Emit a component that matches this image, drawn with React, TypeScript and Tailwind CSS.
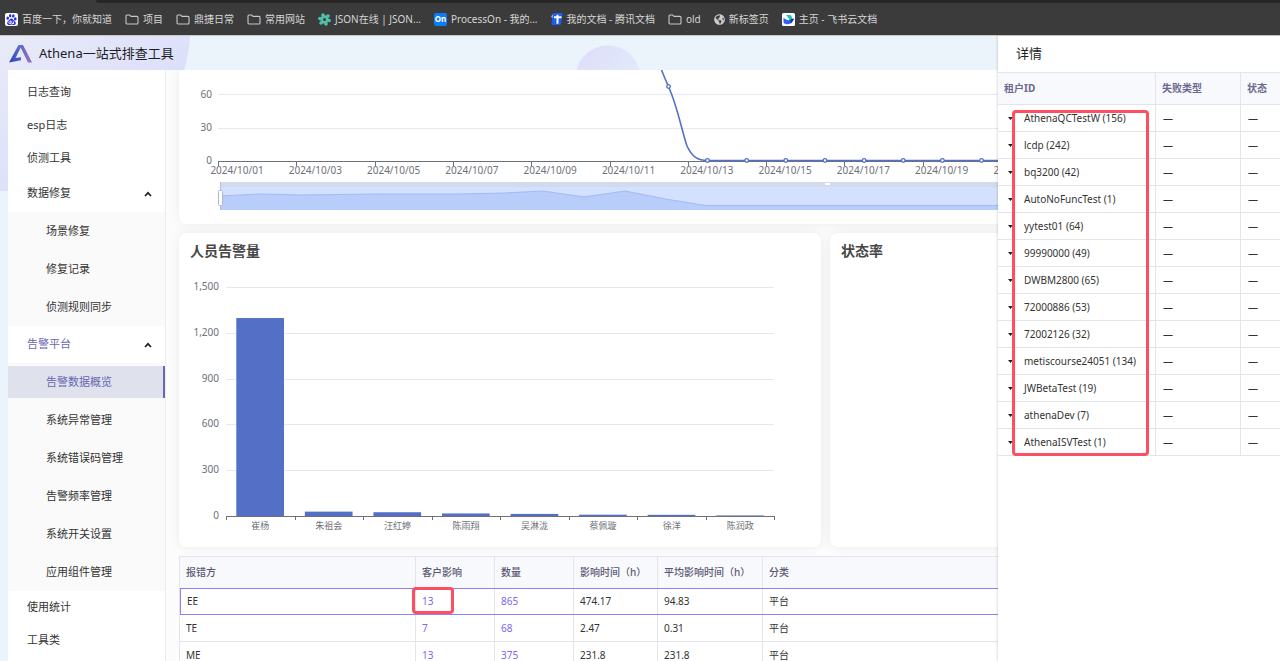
import type { ReactNode } from "react";
import { SiBaidu } from "react-icons/si";
import { FaGlobeAmericas } from "react-icons/fa";

/* ---------------- data ---------------- */

const customers = [
  "AthenaQCTestW (156)",
  "lcdp (242)",
  "bq3200 (42)",
  "AutoNoFuncTest (1)",
  "yytest01 (64)",
  "99990000 (49)",
  "DWBM2800 (65)",
  "72000886 (53)",
  "72002126 (32)",
  "metiscourse24051 (134)",
  "JWBetaTest (19)",
  "athenaDev (7)",
  "AthenaISVTest (1)",
];

const errorRows = [
  { side: "EE", customers: 13, count: 865, hours: "474.17", avg: "94.83", type: "平台" },
  { side: "TE", customers: 7, count: 68, hours: "2.47", avg: "0.31", type: "平台" },
  { side: "ME", customers: 13, count: 375, hours: "231.8", avg: "231.8", type: "平台" },
];

const people = [
  { name: "崔杨", value: 1300 },
  { name: "朱祖会", value: 32 },
  { name: "汪红婷", value: 28 },
  { name: "陈雨翔", value: 20 },
  { name: "吴淋泷", value: 17 },
  { name: "蔡佩璇", value: 12 },
  { name: "徐洋", value: 11 },
  { name: "陈润政", value: 7 },
];

const days = ["01", "03", "05", "07", "09", "11", "13", "15", "17", "19", "21"];

const App = () => {
  return (
    <div className="flex h-screen flex-col overflow-hidden bg-white font-['Noto_Sans','Noto_Sans_CJK_SC',sans-serif] text-[11px] text-[#333333]">
      <BookmarkBar />
      <div className="flex min-h-0 flex-1">
        <div className="relative isolate flex min-w-0 flex-1 flex-col overflow-hidden bg-[#ebf3fb]">
          <HeaderBackdrop />
          <header className="flex h-[34px] shrink-0 items-center gap-[7px] pt-[2px] pl-[9px]">
            <AthenaLogo />
            <h1 className="text-[13px] text-[#1d1d1f]">Athena一站式排查工具</h1>
          </header>
          <div className="flex min-h-0 flex-1 pl-2">
            <Sidebar />
            <main className="min-w-0 flex-1 overflow-hidden bg-[#fcfcfc] pl-[13px]">
              <div className="flex min-w-[1253px] flex-col gap-[9px]">
                <section className="rounded-b-lg bg-white shadow-[0_0_12px_rgba(0,0,0,0.07)]">
                  <TrendChart />
                </section>
                <div className="flex gap-[9px]">
                  <Card title="人员告警量" className="w-[642px] shrink-0">
                    <PeopleChart />
                  </Card>
                  <Card title="状态率" className="flex-1" />
                </div>
                <ErrorTable />
              </div>
            </main>
          </div>
        </div>
        <DetailDrawer />
      </div>
    </div>
  );
};

export default App;

/* ---------------- browser bookmarks ---------------- */

function BookmarkBar() {
  return (
    <nav className="flex h-9 shrink-0 flex-col border-b border-[#c9c9c4] bg-[#3b3b3b] text-[10px] text-[#d6d6d6]">
      <div className="flex h-[3px] pl-24">
        <div className="flex-1 rounded-bl bg-[#272727]" />
      </div>
      <div className="flex flex-1 items-center gap-[13px] pl-[5px] whitespace-nowrap">
        <Bookmark
          label="百度一下，你就知道"
          icon={
            <span className="flex size-[13px] items-center justify-center rounded-xs bg-white">
              <SiBaidu size={11} color="#2932e1" />
            </span>
          }
        />
        <Bookmark label="项目" icon={<FolderIcon />} />
        <Bookmark label="鼎捷日常" icon={<FolderIcon />} />
        <Bookmark label="常用网站" icon={<FolderIcon />} />
        <Bookmark
          label="JSON在线 | JSON..."
          icon={
            <svg width="13" height="13" viewBox="0 0 13 13" fill="#4fc1a6">
              <circle cx="6.5" cy="6.5" r="4.2" />
              <circle cx="5" cy="2" r="1.8" />
              <circle cx="10" cy="3" r="1.8" />
              <circle cx="11.2" cy="7.5" r="1.7" />
              <circle cx="8" cy="11" r="1.8" />
              <circle cx="3" cy="10" r="1.8" />
              <circle cx="1.8" cy="5.5" r="1.7" />
              <circle cx="6.5" cy="6.5" r="1.5" fill="#3b3b3b" />
            </svg>
          }
        />
        <Bookmark
          label="ProcessOn - 我的..."
          icon={
            <span className="flex size-[13px] items-center justify-center rounded-xs bg-[#0a7cf5] text-[8px] leading-none font-bold text-white">
              On
            </span>
          }
        />
        <Bookmark
          label="我的文档 - 腾讯文档"
          icon={
            <svg width="12" height="12" viewBox="0 0 12 12">
              <path d="M3 0h7.5a1 1 0 0 1 1 1L10 11a1 1 0 0 1-1 1H1.500a1 1 0 0 1-1-1L2 1a1 1 0 0 1 1-1Z" fill="#1c5cf0" />
              <path d="M0 3.500 2 1v3ZM0 3.500h2l-.5 2Z" fill="#7fb0ff" />
              <path d="M3 4.200h7.500M6.500 1.800v9" stroke="#fff" strokeWidth="2" />
            </svg>
          }
        />
        <Bookmark label="old" icon={<FolderIcon />} />
        <Bookmark label="新标签页" icon={<FaGlobeAmericas size={11} color="#c9cbce" />} />
        <Bookmark
          label="主页 - 飞书云文档"
          icon={
            <svg width="13" height="13" viewBox="0 0 13 13">
              <rect width="13" height="13" rx="1.500" fill="#fff" />
              <path d="M4 2h4.500c1 1 1.600 2.400 1.800 3.800L7.500 7C6.500 5 5.500 3.400 4 2Z" fill="#12c9b2" />
              <path d="M1.500 4.500C4 7 6.500 8 8.500 6.600 9.700 5.700 10.800 5.500 12 5.900 10.800 7.500 10.500 9.500 8.500 10.600c-2.500 1.300-5.300.7-7-.8Z" fill="#2f62f4" />
              <path d="M8 7c1-1.200 2.600-1.600 4-1.100-1.200 1.600-1.500 3-3 4.300Z" fill="#123a9c" />
            </svg>
          }
        />
      </div>
    </nav>
  );
}

function Bookmark({ label, icon }: { label: string; icon: ReactNode }) {
  return (
    <a href="#" className="flex items-center gap-[4px]">
      {icon}
      {label}
    </a>
  );
}

function FolderIcon() {
  return (
    <svg width="14" height="11" viewBox="0 0 14 11" fill="none" stroke="#c8c8c8" strokeWidth="1.100">
      <path d="M1 2a1 1 0 0 1 1-1h2.600l1.500 1.400H12a1 1 0 0 1 1 1V9a1 1 0 0 1-1 1H2a1 1 0 0 1-1-1Z" />
    </svg>
  );
}

/* ---------------- header ---------------- */

function HeaderBackdrop() {
  return (
    <svg className="absolute top-0 left-0 -z-10" width="700" height="155" viewBox="0 0 700 155">
      <defs>
        <linearGradient id="slab" x1="0" y1="0" x2="1" y2="1">
          <stop offset="0" stopColor="#e9ebf8" />
          <stop offset="0.6" stopColor="#dcdffa" />
          <stop offset="1" stopColor="#dadcfa" />
        </linearGradient>
        <linearGradient id="moon" x1="0" y1="0" x2="1" y2="1">
          <stop offset="0" stopColor="#dcddf8" />
          <stop offset="0.7" stopColor="#e3eafc" />
        </linearGradient>
      </defs>
      <path d="M0 0H190Q189 18 184 34L150 155H0Z" fill="url(#slab)" />
      <circle cx="608" cy="42" r="32.500" fill="url(#moon)" />
    </svg>
  );
}

function AthenaLogo() {
  return (
    <svg width="23" height="18" viewBox="0 0 23 18">
      <defs>
        <linearGradient id="logoLeft" x1="0" y1="1" x2="1" y2="0">
          <stop offset="0" stopColor="#2444c4" />
          <stop offset="1" stopColor="#6a74c8" />
        </linearGradient>
        <linearGradient id="logoRight" x1="0" y1="0" x2="1" y2="1">
          <stop offset="0" stopColor="#5968c0" />
          <stop offset="1" stopColor="#9a72bb" />
        </linearGradient>
      </defs>
      <path d="M9.500 0H14L23 17.500H19L12 3.200Z" fill="url(#logoRight)" />
      <path d="M9.500 0H13L6.500 13 12 12.200V15.200L0 17.500Z" fill="url(#logoLeft)" />
    </svg>
  );
}

/* ---------------- sidebar ---------------- */

function Sidebar() {
  return (
    <aside className="w-[158px] shrink-0 overflow-hidden border-r border-[#ededf0] bg-white pt-[6px]">
      <MenuItem label="日志查询" />
      <MenuItem label="esp日志" />
      <MenuItem label="侦测工具" />
      <MenuGroup label="数据修复" items={["场景修复", "修复记录", "侦测规则同步"]} />
      <MenuGroup
        label="告警平台"
        active="告警数据概览"
        items={[
          "告警数据概览",
          "系统异常管理",
          "系统错误码管理",
          "告警频率管理",
          "系统开关设置",
          "应用组件管理",
        ]}
      />
      <MenuItem label="使用统计" />
      <MenuItem label="工具类" />
    </aside>
  );
}

function MenuItem({ label }: { label: string }) {
  return (
    <a href="#" className="flex h-[33px] items-center pl-[19px]">
      {label}
    </a>
  );
}

function MenuGroup({
  label,
  items,
  active,
}: {
  label: string;
  items: string[];
  active?: string;
}) {
  return (
    <div>
      <button
        type="button"
        className={`flex h-[37px] w-full items-center justify-between pr-[13px] pl-[19px] ${
          active ? "text-[#6a66b0]" : ""
        }`}
      >
        {label}
        <svg width="8" height="6" viewBox="0 0 8 6" fill="none" stroke="#222" strokeWidth="1.700">
          <path d="M1 5 4 1.800 7 5" />
        </svg>
      </button>
      <div className="bg-[#fafafa]">
        {items.map((item) => (
          <div key={item} className="py-[3px]">
            <a
              href="#"
              className={`flex h-8 items-center pl-[38px] ${
                item === active
                  ? "border-r-2 border-[#6a66b0] bg-[#dfe1ed] text-[#6a66b0]"
                  : ""
              }`}
            >
              {item}
            </a>
          </div>
        ))}
      </div>
    </div>
  );
}

/* ---------------- charts ---------------- */

function Card({
  title,
  className,
  children,
}: {
  title: string;
  className: string;
  children?: ReactNode;
}) {
  return (
    <section className={`rounded-lg bg-white shadow-[0_0_12px_rgba(0,0,0,0.07)] ${className}`}>
      <h2 className="flex h-[35px] items-center pl-[11px] text-[14px] font-bold text-[#464646]">
        {title}
      </h2>
      {children}
    </section>
  );
}

function TrendChart() {
  const step = 39.15;
  const zeros = Array.from({ length: 10 }, (_, i) => 528.5 + i * step);

  return (
    <svg className="block" width="1253" height="154" viewBox="0 0 1253 154">
      <g stroke="#e6eaf4">
        <path d="M39 24.500H1253M39 58.500H1253" />
      </g>
      <path d="M39 91.500H1253" stroke="#6e7079" />
      <g fontSize="10" fill="#6e7079" textAnchor="end">
        <text x="33" y="28">60</text>
        <text x="33" y="61">30</text>
        <text x="33" y="94">0</text>
      </g>
      <g fontSize="10" fill="#6e7079" textAnchor="middle">
        {days.map((d, i) => (
          <g key={d}>
            <path d={`M${Math.round(39 + i * step * 2) + 0.5} 91v5`} stroke="#6e7079" />
            <text x={58 + i * step * 2} y="104">
              2024/10/{d}
            </text>
          </g>
        ))}
      </g>
      <path
        d="M482.500 0C485 6 487 11 489.500 16.500C499 38 502 58 508 76C513 87 519 90.500 528.500 90.500H1253"
        fill="none"
        stroke="#5470c6"
        strokeWidth="1.600"
      />
      <g fill="#fff" stroke="#5470c6" strokeWidth="1.300">
        <circle cx="489.500" cy="16.500" r="1.800" />
        {zeros.map((x) => (
          <circle key={x} cx={x} cy="90.500" r="1.800" />
        ))}
      </g>

      {/* zoom slider */}
      <rect x="41" y="112" width="1212" height="28" fill="#d3e0fe" />
      <rect x="41" y="112" width="1212" height="5" fill="#d2daee" />
      <path
        d="M41 126 82 124 121 125 201 124 281 124 326 123 364 121 405 127 446 121 486 129 527 135.500H1253V140H41Z"
        fill="#b9cdfb"
      />
      <path
        d="M41 126 82 124 121 125 201 124 281 124 326 123 364 121 405 127 446 121 486 129 527 135.500H1253"
        fill="none"
        stroke="#a0bbfa"
      />
      <path d="M41.500 112V140" stroke="#acc0e6" />
      <rect x="39.500" y="120.500" width="4" height="15" rx="1" fill="#fff" stroke="#acb8d1" />
      <rect x="646" y="113" width="5" height="2" fill="#fff" />
    </svg>
  );
}

function PeopleChart() {
  const labels = ["1,500", "1,200", "900", "600", "300", "0"];
  const bandWidth = 68.56;
  const base = 248.5;

  return (
    <svg className="block" width="642" height="279" viewBox="0 0 642 279">
      {labels.map((label, i) => {
        const y = Math.round(19 + i * 45.8) + 0.5;
        return (
          <g key={label}>
            {label !== "0" && <path d={`M47 ${y}H595`} stroke="#e4e8f3" />}
            <text x="40" y={y + 2} fontSize="10" fill="#6e7079" textAnchor="end">
              {label}
            </text>
          </g>
        );
      })}
      {people.map((p, i) => {
        const height = (p.value / 1500) * 229;
        const x = 47 + i * bandWidth;
        return (
          <g key={p.name}>
            <rect x={x + 10.3} y={base - height} width="47.700" height={height} fill="#5470c6" />
            <text x={x + bandWidth / 2} y="261" fontSize="9" fill="#6e7079" textAnchor="middle">
              {p.name}
            </text>
          </g>
        );
      })}
      <path d="M47 248.500H596" stroke="#6e7079" />
      {Array.from({ length: 9 }, (_, i) => (
        <path key={i} d={`M${Math.round(47 + i * bandWidth) + 0.5} 248v4`} stroke="#6e7079" />
      ))}
    </svg>
  );
}

/* ---------------- tables ---------------- */

function ErrorTable() {
  const head = ["报错方", "客户影响", "数量", "影响时间（h）", "平均影响时间（h）", "分类"];

  return (
    <table className="w-full table-fixed border-separate border-spacing-0 border-t border-l border-[#e4e5ea] bg-white text-left">
      <colgroup>
        <col className="w-[236px]" />
        <col className="w-[79px]" />
        <col className="w-[79px]" />
        <col className="w-[84px]" />
        <col className="w-[105px]" />
        <col />
      </colgroup>
      <thead>
        <tr className="h-[31px] bg-[#f8f9fc] text-[10px] text-[#5c5875]">
          {head.map((h) => (
            <th
              key={h}
              className="border-r border-[#e4e5ea] px-[6px] py-0 font-medium whitespace-nowrap"
            >
              {h}
            </th>
          ))}
        </tr>
      </thead>
      <tbody>
        {errorRows.map((r, i) => {
          const selected = i === 0;
          const cell = selected
            ? "border-y border-[#8f80f5] px-[6px] py-0 shadow-[inset_-1px_0_0_#e4e5ea]"
            : "border-r border-b border-[#e4e5ea] px-[6px] py-0";
          return (
            <tr key={r.side} className="h-[27px] text-[10px]">
              <td className={selected ? `border-l ${cell}` : cell}>{r.side}</td>
              <td className={`relative ${cell}`}>
                <a href="#" className="text-[#7b66f5]">
                  {r.customers}
                </a>
                {selected && (
                  <span className="absolute -top-[2px] -left-[4px] h-[27px] w-[42px] rounded-[4px] border-3 border-[#ff4d61]" />
                )}
              </td>
              <td className={cell}>
                <a href="#" className="text-[#7b66f5]">
                  {r.count}
                </a>
              </td>
              <td className={cell}>{r.hours}</td>
              <td className={cell}>{r.avg}</td>
              <td className={cell}>{r.type}</td>
            </tr>
          );
        })}
      </tbody>
    </table>
  );
}

function DetailDrawer() {
  return (
    <aside className="z-10 flex w-[282px] shrink-0 flex-col bg-white shadow-[-1px_0_2px_rgba(0,0,0,0.12)]">
      <h2 className="flex h-9 items-center pl-[18px] text-[13px] text-[#222222]">详情</h2>
      <div className="relative">
        <table className="w-full table-fixed border-separate border-spacing-0 border-t border-[#e4e5ea] text-left text-[10px]">
          <colgroup>
            <col className="w-[158px]" />
            <col className="w-[85px]" />
            <col />
          </colgroup>
          <thead>
            <tr className="h-8 bg-[#f8f9fc] text-[#6d6890]">
              {["租户ID", "失败类型", "状态"].map((h) => (
                <th
                  key={h}
                  className="border-r border-b border-[#e4e5ea] px-[6px] py-0 font-bold last:border-r-0"
                >
                  {h}
                </th>
              ))}
            </tr>
          </thead>
          <tbody>
            {customers.map((name) => (
              <tr key={name} className="h-[27px]">
                <td className="border-r border-b border-[#e4e5ea] py-0 pl-[10px]">
                  <div className="flex items-center gap-[11px] whitespace-nowrap">
                    <svg width="5" height="3" viewBox="0 0 5 3" fill="#222">
                      <path d="M0 0H5L2.500 3Z" />
                    </svg>
                    {name}
                  </div>
                </td>
                <td className="border-r border-b border-[#e4e5ea] py-0 pl-[7px]">—</td>
                <td className="border-b border-[#e4e5ea] py-0 pl-[7px]">—</td>
              </tr>
            ))}
          </tbody>
        </table>
        <span className="absolute top-[38px] left-[14px] h-[346px] w-[137px] rounded-[4px] border-3 border-[#ff4d61]" />
      </div>
    </aside>
  );
}
